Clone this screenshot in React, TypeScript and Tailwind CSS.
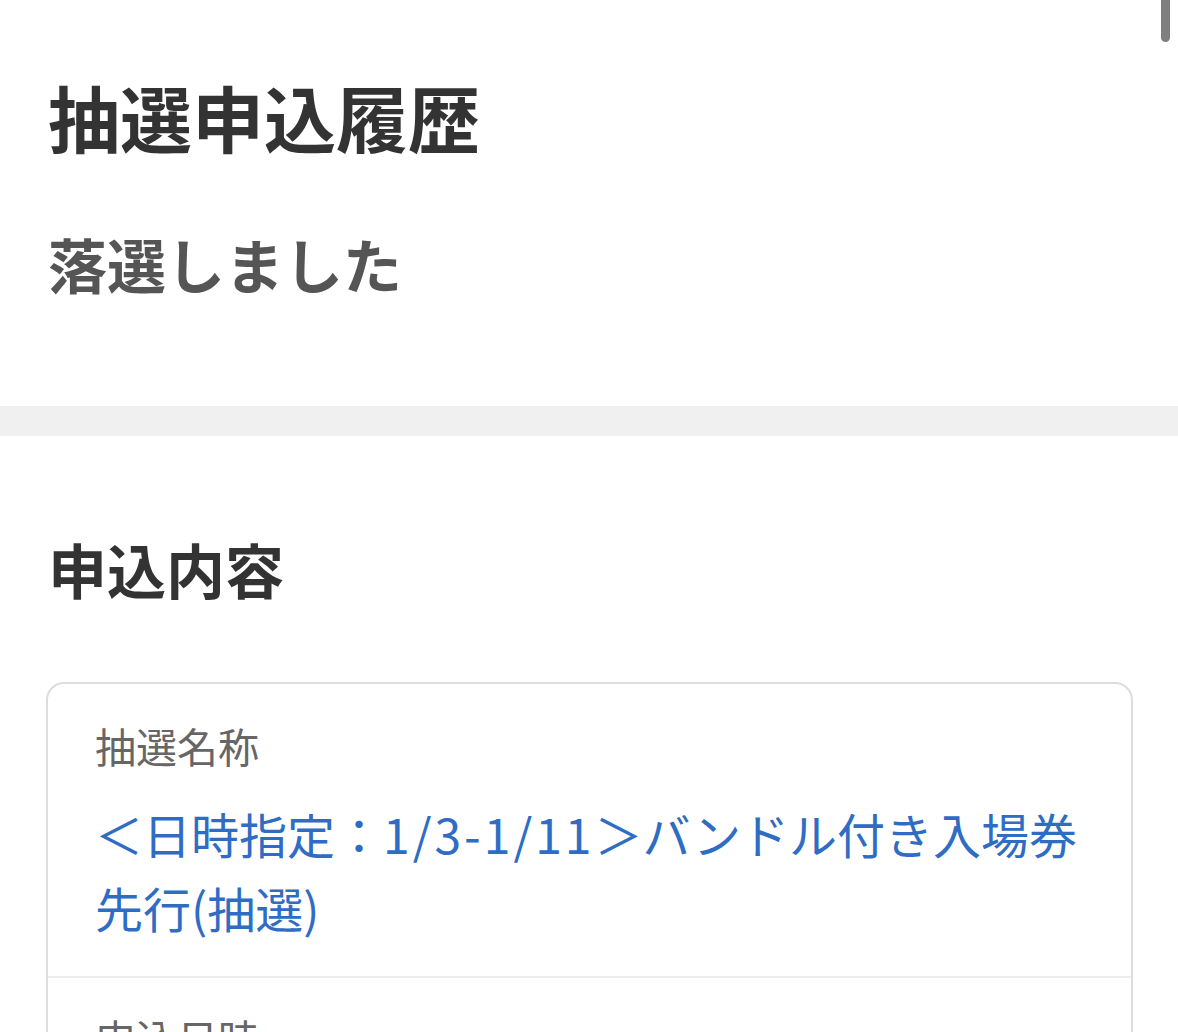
import React from "react";

export default function App() {
  return (
    <div
      className="relative min-h-screen bg-white overflow-hidden"
      style={{ fontFamily: '"Noto Sans CJK JP", "Noto Sans", sans-serif' }}
    >
      <div className="absolute top-[-10px] left-[1161px] w-[9px] h-[52px] rounded-full bg-[#7f7f7f]" />
      <section className="px-12 pt-[80px] pb-[113px]">
        <h1 className="text-[72px] leading-[72px] font-bold text-[#333333]">抽選申込履歴</h1>
        <p className="mt-[82px] text-[59px] leading-[59px] font-bold text-[#555555]">落選しました</p>
      </section>
      <div className="h-[30px] bg-[#f0f0f0]" />
      <section className="pt-[103px]">
        <h2 className="px-12 text-[59px] leading-[59px] font-bold text-[#333333]">申込内容</h2>
        <div className="mt-[84px] ml-[46px] w-[1087px] border-2 border-[#dddddd] rounded-[18px]">
          <div className="px-[47px] pt-[41px] pb-[32px] border-b-2 border-[#eeeeee]">
            <div className="text-[41px] leading-[41px] text-[#666666]">抽選名称</div>
            <div className="mt-[30px] text-[48px] leading-[74px] text-[#2f6cc4] whitespace-nowrap">
              ＜日時指定：<span className="tracking-[3px]">1/3-1/11</span>＞バンドル付き入場券
              <br />
              先行(抽選)
            </div>
          </div>
          <div className="px-[47px] pt-[39px] pb-[30px]">
            <div className="text-[41px] leading-[41px] text-[#666666]">申込日時</div>
            <div className="mt-[32px] text-[44px] leading-[60px] text-[#333333]">2024/12/20 12:00</div>
          </div>
        </div>
      </section>
    </div>
  );
}
